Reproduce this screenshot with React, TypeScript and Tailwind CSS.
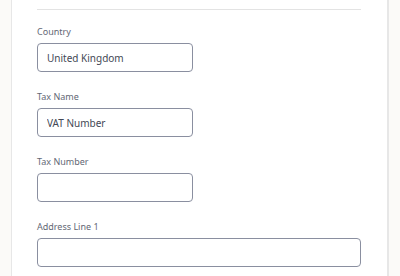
const fields = [
  { label: 'Country', value: 'United Kingdom', wide: false },
  { label: 'Tax Name', value: 'VAT Number', wide: false },
  { label: 'Tax Number', value: '', wide: false },
  { label: 'Address Line 1', value: '', wide: true },
];

const App = () => {
  return (
    <div
      className="h-[276px] w-[400px] overflow-hidden bg-[#fbfaf8] px-[11px]"
      style={{ fontFamily: '"Noto Sans", "Liberation Sans", sans-serif' }}
    >
      <div className="h-full w-[378px] border-x border-r-2 border-[#e7e7e7] bg-white pl-[25px] pr-[26px] pt-[9px]">
        <div className="h-px w-[324px] bg-[#e3e3e3]" />
        <div className="mt-[16px] flex flex-col gap-[19px]">
          {fields.map((f) => (
            <div key={f.label}>
              <label className="block text-[9px] leading-[12px] text-[#636875]">{f.label}</label>
              <input
                readOnly
                value={f.value}
                className={`mt-[5px] h-[29px] ${f.wide ? 'w-[324px]' : 'w-[156px]'} rounded-[4px] border border-[#8a8fa0] bg-white px-[9px] text-[10px] text-[#434855] outline-none`}
              />
            </div>
          ))}
        </div>
      </div>
    </div>
  );
};

export default App;
